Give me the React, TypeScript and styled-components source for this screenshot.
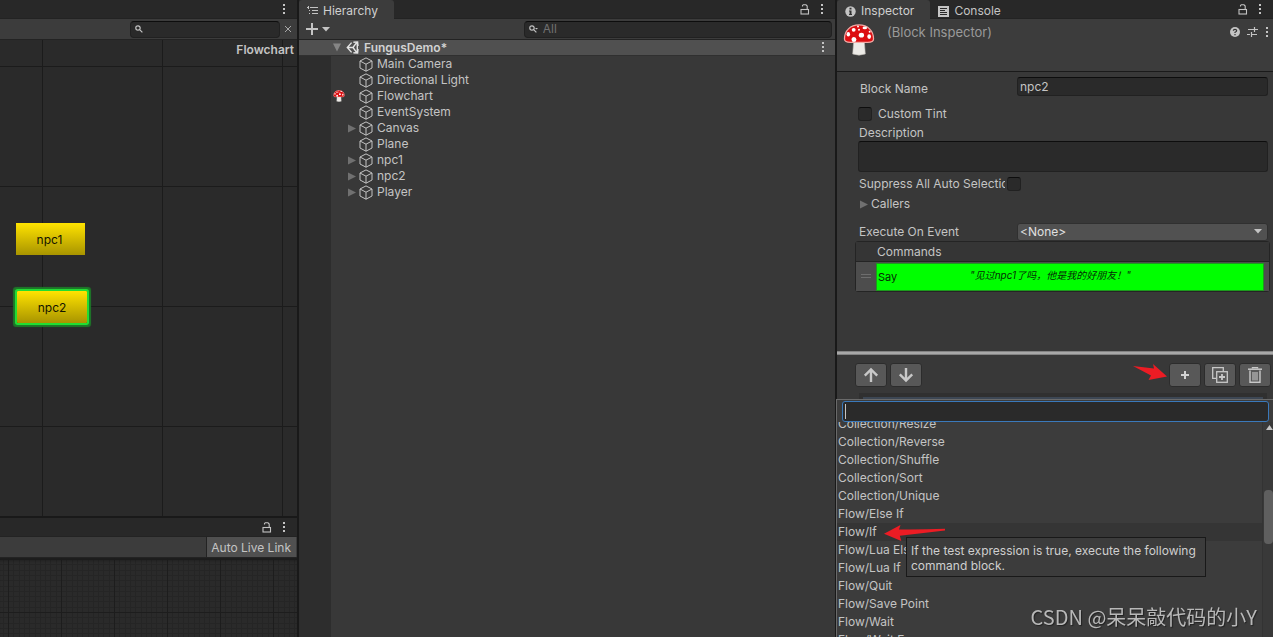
import React from 'react';
import styled, { createGlobalStyle, css } from 'styled-components';

const GlobalStyle = createGlobalStyle`
  *, *::before, *::after { box-sizing: border-box; }
  body {
    margin: 0;
    background: #191919;
    color: #c4c4c4;
    font: 12px/16px Inter, "Noto Sans CJK SC", sans-serif;
    overflow: hidden;
  }
  button, input, select, textarea { font: inherit; color: inherit; margin: 0; }
  button { padding: 0; border: 0; background: none; text-align: left; }
  ul { list-style: none; margin: 0; padding: 0; }
  svg { display: block; flex: none; }
`;

/* ---------- shared parts ---------- */

const Editor = styled.main`
  display: grid;
  grid-template-columns: minmax(0, 297fr) minmax(0, 536fr) minmax(0, 436fr);
  column-gap: 2px;
  height: 100vh;
`;

const Column = styled.section`
  display: flex;
  flex-direction: column;
  min-height: 0;
  min-width: 0;
  background: #383838;
`;

const TabBar = styled.header`
  display: flex;
  flex: none;
  height: 19px;
  background: #282828;
  box-shadow: inset 0 -1px #232323;
`;

const Tab = styled.button<{ $active?: boolean }>`
  display: flex;
  align-items: center;
  gap: 5px;
  height: 19px;
  padding: 3px 16px 0 8px;
  border-radius: 3px 3px 0 0;
  ${(p) => p.$active && css`background: #3c3c3c; color: #d0d0d0;`}
`;

const Spacer = styled.div`
  flex: 1;
`;

const TabTools = styled.div`
  display: flex;
  align-items: center;
  gap: 10px;
  padding-right: 11px;
`;

const IconButton = styled.button`
  display: flex;
  align-items: center;
  justify-content: center;
  flex: none;
`;

const Toolbar = styled.div`
  display: flex;
  align-items: center;
  flex: none;
  height: 21px;
  background: #3c3c3c;
  border-bottom: 1px solid #232323;
`;

const fieldLook = css`
  background: #2a2a2a;
  border: 1px solid #212121;
  border-top-color: #0d0d0d;
  border-radius: 3px;
  outline: 0;
`;

const SearchBox = styled.label<{ $width: string }>`
  ${fieldLook}
  display: flex;
  align-items: center;
  gap: 5px;
  width: ${(p) => p.$width};
  height: 17px;
  padding: 0 4px;
  border-radius: 4px;
  input {
    flex: 1;
    min-width: 0;
    height: 14px;
    padding: 0;
    border: 0;
    outline: 0;
    background: none;
  }
  input::placeholder { color: #717171; }
`;

/* ---------- icons ---------- */

const Kebab = () => (
  <svg width="4" height="11" viewBox="0 0 4 11" fill="#c4c4c4">
    <rect x="1" y="0" width="2" height="2" /><rect x="1" y="4" width="2" height="2" /><rect x="1" y="8" width="2" height="2" />
  </svg>
);

const Lock = () => (
  <svg width="10" height="11" viewBox="0 0 10 11" fill="none" stroke="#c4c4c4" strokeWidth="1.1">
    <rect x="1" y="5.5" width="7.5" height="4.5" /><path d="M2.5 2.6V1.4L3.3.8H6L7.2 2V5" />
  </svg>
);

const Magnifier = ({ caret }: { caret?: boolean }) => (
  <svg width="9" height="8" viewBox="0 0 9 8" fill="none" stroke="#c4c4c4" strokeWidth="1.2">
    <circle cx="3" cy="3" r="2.2" /><path d="M4.6 4.6 7.4 7.4" />
    {caret && <path d="M6 3h3L7.5 4.6z" fill="#c4c4c4" stroke="none" />}
  </svg>
);

const Triangle = ({ open }: { open?: boolean }) => (
  <svg width="8" height="9" viewBox="0 0 8 9" fill={open ? '#858585' : '#707070'}>
    <path d={open ? 'M0 .5h8L4 8.5z' : 'M0 .5v8l8-4z'} />
  </svg>
);

const Cube = () => (
  <svg width="14" height="15" viewBox="0 0 14 15" fill="none" stroke="#c4c4c4" strokeWidth="1">
    <path d="M7 .9 13 4v7L7 14.2 1 11V4zM1 4l6 3.2L13 4M7 7.2v7" />
  </svg>
);

const UnityLogo = () => (
  <svg width="13" height="13" viewBox="0 0 13 13" fill="none" stroke="#e4e4e4" strokeWidth="1.4">
    <path d="M5.6 1.6 1.3 6.5l4.3 4.9M7.4 1.2 11.6.9 12 5M7.4 11.8l4.2.3L12 8M1.6 6.5h5.6M7 6.5 10.6 1.6M7 6.5l3.6 4.9M11.3 2.4v8.2" />
  </svg>
);

const Mushroom = ({ size }: { size: number }) => (
  <svg width={size} height={size} viewBox="0 0 32 33">
    <path d="M10.500 18 9.500 31q6.500 2.200 13 0L21.500 18z" fill="#eceae6" stroke="#bdbab4" strokeWidth=".6" />
    <path d="M1 15.500C1 7 7 1 16 1s15 6 15 14.500Q31 19 25 19H7q-6 0-6-3.500z" fill="#dc0d10" stroke="#f2a9a5" strokeWidth="1.300" />
    <g fill="#fff">
      <ellipse cx="5" cy="10.500" rx="1.800" ry="2.300" /><ellipse cx="10.500" cy="6" rx="2" ry="1.900" />
      <ellipse cx="18.500" cy="11.500" rx="2.700" ry="2.500" /><ellipse cx="10.800" cy="16" rx="2.500" ry="2.600" />
      <ellipse cx="22" cy="4" rx="2.300" ry="1.400" /><ellipse cx="26.500" cy="13" rx="1.900" ry="2.500" />
      <circle cx="16" cy="6" r="1" /><circle cx="27" cy="8" r="1" /><circle cx="15" cy="2.500" r="1" />
    </g>
  </svg>
);

const DropArrow = () => (
  <svg width="8" height="5" viewBox="0 0 8 5" fill="#c4c4c4"><path d="M0 0h8L4 4.500z" /></svg>
);

/* ---------- flowchart window ---------- */

const Canvas = styled.div`
  position: relative;
  flex: 0 0 476px;
  background:
    linear-gradient(to right, #1b1b1b 1px, transparent 1px) 42px 26px / 120px 120px,
    linear-gradient(to bottom, #1b1b1b 1px, transparent 1px) 42px 26px / 120px 120px,
    #2a2a2a;
`;

const CanvasTitle = styled.h2`
  margin: 0;
  padding: 2px 3px 0 0;
  text-align: right;
  font-size: 12px;
  font-weight: 600;
  color: #c4c4c4;
`;

const Node = styled.button<{ $x: number; $y: number; $selected?: boolean }>`
  position: absolute;
  left: ${(p) => p.$x}px;
  top: ${(p) => p.$y}px;
  width: 69px;
  height: 32px;
  padding: 2px 2px 0 0;
  text-align: center;
  color: #141400;
  background: linear-gradient(#ffe300, #a89400);
  ${(p) => p.$selected && css`
    width: 70px;
    padding-right: 0;
    border-radius: 1px;
    box-shadow: 0 0 0 2px #22dd33, 0 0 1px 4px #1d7a28;
  `}
`;

const CloseButton = styled(IconButton)`
  width: 17px;
  padding-right: 1px;
`;

const LiveLink = styled.button`
  height: 20px;
  padding: 1px 5px 0 4px;
  margin-right: 1px;
  background: #505050;
  border-left: 1px solid #232323;
  white-space: nowrap;
`;

const AnimatorGrid = styled.div`
  flex: 1;
  box-shadow: inset 0 4px 3px -2px #1c1c1c;
  background:
    linear-gradient(to right, #1d1d1d 1px, transparent 1px) 8px 1px / 53px 53px,
    linear-gradient(to bottom, #1d1d1d 1px, transparent 1px) 8px 1px / 53px 53px,
    repeating-linear-gradient(to right, #252525 0 1px, transparent 1px 10%) 8px 1px / 53px 53px,
    repeating-linear-gradient(to bottom, #252525 0 1px, transparent 1px 10%) 8px 1px / 53px 53px,
    #2a2a2a;
`;

const LowerTabBar = styled(TabBar)`
  height: 21px;
  border-top: 2px solid #191919;
`;

function FlowchartWindow() {
  return (
    <Column>
      <TabBar>
        <Spacer />
        <TabTools><IconButton aria-label="Flowchart menu"><Kebab /></IconButton></TabTools>
      </TabBar>
      <Toolbar>
        <Spacer />
        <SearchBox $width="150px"><Magnifier /><input aria-label="Search blocks" /></SearchBox>
        <CloseButton aria-label="Clear search">
          <svg width="8" height="8" viewBox="0 0 8 8" stroke="#a8a8a8"><path d="M1 1l6 6M7 1 1 7" /></svg>
        </CloseButton>
      </Toolbar>
      <Canvas>
        <CanvasTitle>Flowchart</CanvasTitle>
        <Node $x={16} $y={183}>npc1</Node>
        <Node $x={17} $y={251} $selected>npc2</Node>
      </Canvas>
      <LowerTabBar>
        <Spacer />
        <TabTools>
          <IconButton aria-label="Lock"><Lock /></IconButton>
          <IconButton aria-label="Animator menu"><Kebab /></IconButton>
        </TabTools>
      </LowerTabBar>
      <Toolbar>
        <Spacer />
        <LiveLink>Auto Live Link</LiveLink>
      </Toolbar>
      <AnimatorGrid />
    </Column>
  );
}

/* ---------- hierarchy ---------- */

const AddButton = styled(IconButton)`
  gap: 4px;
  padding-left: 7px;
`;

const HierarchySearch = styled(SearchBox)`
  margin-right: 3px;
`;

const SceneRow = styled.div`
  display: flex;
  align-items: center;
  flex: none;
  height: 16px;
  padding: 0 10px 0 34px;
  gap: 5px;
  background: #505050;
  border-bottom: 1px solid #303030;
  font-weight: 600;
  color: #d2d2d2;
`;

const Tree = styled.ul`
  flex: 1;
  background: linear-gradient(to right, #2d2d2d 32px, #383838 32px);
`;

const TreeRow = styled.li`
  display: grid;
  grid-template-columns: 12px 14px 14px 1fr;
  align-items: center;
  height: 16px;
  padding-left: 34px;
  button { padding-left: 4px; }
`;

const TreeSlot = styled.span`
  display: flex;
  &:nth-child(2) { padding-left: 3px; }
`;

const objects: { name: string; children?: boolean; fungus?: boolean }[] = [
  { name: 'Main Camera' },
  { name: 'Directional Light' },
  { name: 'Flowchart', fungus: true },
  { name: 'EventSystem' },
  { name: 'Canvas', children: true },
  { name: 'Plane' },
  { name: 'npc1', children: true },
  { name: 'npc2', children: true },
  { name: 'Player', children: true },
];

function HierarchyWindow() {
  return (
    <Column>
      <TabBar>
        <Tab $active>
          <svg width="11" height="10" viewBox="0 0 11 10" fill="#c4c4c4">
            <path d="M0 1h2v1H0zM3 1h8v1H3zM2 4h1v1H2zM5 4h6v1H5zM2 7h1v1H2zM5 7h6v1H5zM1 0h1v3H1z" />
          </svg>
          Hierarchy
        </Tab>
        <Spacer />
        <TabTools>
          <IconButton aria-label="Lock"><Lock /></IconButton>
          <IconButton aria-label="Hierarchy menu"><Kebab /></IconButton>
        </TabTools>
      </TabBar>
      <Toolbar>
        <AddButton aria-label="Create">
          <svg width="12" height="12" viewBox="0 0 12 12" fill="#c4c4c4"><path d="M5 0h2v5h5v2H7v5H5V7H0V5h5z" /></svg>
          <DropArrow />
        </AddButton>
        <Spacer />
        <HierarchySearch $width="57.5%"><Magnifier caret /><input aria-label="Search hierarchy" placeholder="All" /></HierarchySearch>
      </Toolbar>
      <SceneRow>
        <Triangle open />
        <UnityLogo />
        FungusDemo*
        <Spacer />
        <IconButton aria-label="Scene menu"><Kebab /></IconButton>
      </SceneRow>
      <Tree>
        {objects.map((o) => (
          <TreeRow key={o.name}>
            <TreeSlot>{o.fungus && <Mushroom size={12} />}</TreeSlot>
            <TreeSlot>{o.children && <Triangle />}</TreeSlot>
            <Cube />
            <button>{o.name}</button>
          </TreeRow>
        ))}
      </Tree>
    </Column>
  );
}

/* ---------- inspector ---------- */

const InspectorHeader = styled.div`
  display: flex;
  align-items: flex-start;
  flex: none;
  height: 53px;
  padding: 5px 4px 0 6px;
  background: #3c3c3c;
  border-bottom: 1px solid #1a1a1a;
`;

const InspectorTitle = styled.h1`
  flex: 1;
  margin: 0;
  padding-left: 12px;
  font-size: 13px;
  font-weight: 400;
  color: #9a9a9a;
`;

const HeaderTools = styled.div`
  display: flex;
  align-items: center;
  gap: 7px;
  height: 16px;
`;

const Properties = styled.div`
  display: flex;
  flex-direction: column;
  flex: none;
  height: 279px;
  padding: 4px 3px 0 18px;
`;

const Field = styled.div<{ $height: number }>`
  display: grid;
  grid-template-columns: minmax(0, 149px) minmax(0, 1fr);
  align-items: center;
  gap: 0 9px;
  height: ${(p) => p.$height}px;
  padding: 0 2px 0 4px;
`;

const Label = styled.label`
  overflow: hidden;
  white-space: nowrap;
`;

const NameLabel = styled(Label)`
  padding: 6px 0 0 1px;
`;

const TextField = styled.input`
  ${fieldLook}
  width: 100%;
  height: 19px;
  padding: 0 2px;
`;

const Check = styled.input`
  ${fieldLook}
  appearance: none;
  flex: none;
  width: 14px;
  height: 14px;
`;

const CheckRow = styled.div`
  display: flex;
  align-items: center;
  gap: 6px;
  height: 28px;
  padding: 8px 0 0 3px;
`;

const SuppressRow = styled(CheckRow)`
  gap: 2px;
  height: 23px;
  padding: 0 0 0 4px;
  ${Label} { width: 146px; }
`;

const TextArea = styled.textarea`
  ${fieldLook}
  display: block;
  width: calc(100% - 5px);
  height: 31px;
  margin: 0 2px 0 3px;
  resize: none;
`;

const DescriptionLabel = styled(Label)`
  height: 17px;
  padding: 1px 0 0 4px;
`;

const Foldout = styled.button`
  display: flex;
  align-items: center;
  gap: 3px;
  height: 18px;
  padding-left: 5px;
  margin-bottom: 9px;
`;

const SelectWrap = styled.div`
  display: flex;
  align-items: center;
  position: relative;
  svg { position: absolute; right: 6px; pointer-events: none; }
`;

const Select = styled.select`
  appearance: none;
  width: 100%;
  height: 18px;
  padding: 0 2px;
  background: #515151;
  border: 1px solid #303030;
  border-radius: 3px;
  color: #e0e0e0;
`;

const CommandBox = styled.section`
  border: 1px solid #242424;
  border-radius: 3px;
  background: #414141;
`;

const CommandTitle = styled.h3`
  height: 20px;
  margin: 0;
  padding: 2px 0 0 21px;
  font-size: 12px;
  font-weight: 400;
  background: #353535;
  border-bottom: 1px solid #242424;
`;

const CommandRow = styled.div`
  display: grid;
  grid-template-columns: 20px minmax(0, 1fr);
  align-items: center;
  height: 29px;
  padding: 1px 5px 0 0;
  background: #4d4d4d;
`;

const CommandCard = styled.button`
  display: grid;
  grid-template-columns: 92px minmax(0, 1fr);
  height: 28px;
  padding-left: 1px;
  border: 1px solid #1d9a1d;
  background: #00ff00;
  color: #062a06;
  font-size: 11px;
  line-height: 27px;
  em { font-size: 10px; line-height: 22px; }
`;

const Divider = styled.hr`
  flex: none;
  width: 100%;
  height: 4px;
  margin: 0;
  border: solid #838383;
  border-width: 1px 0;
  background: #a8a8a8;
`;

const ButtonStrip = styled.div`
  position: relative;
  display: flex;
  flex: none;
  gap: 3px;
  height: 38px;
  padding: 8px 2px 0 18px;
`;

const ToolButton = styled.button`
  display: flex;
  align-items: center;
  justify-content: center;
  width: 32px;
  height: 24px;
  border: 1px solid #2c2c2c;
  border-radius: 3px;
  background: #585858;
`;

const PlusPointer = styled.svg`
  position: absolute;
  right: 106px;
  top: 8px;
`;

const HiddenBlock = styled.div`
  flex: none;
  height: 6px;
  margin: 0 6px 0 22px;
  padding: 4px 4px 0;
  background: #303030;
  &::before { content: ''; display: block; height: 2px; background: #3d4754; }
`;

function InspectorWindow() {
  return (
    <Column>
      <TabBar>
        <Tab $active>
          <svg width="11" height="11" viewBox="0 0 11 11"><circle cx="5.500" cy="5.500" r="5.200" fill="#c4c4c4" /><path d="M4.500 1.800h2v1.600h-2zM4 4.400h2.500V8H7v1H4V8h.6V5.400H4z" fill="#303030" /></svg>
          Inspector
        </Tab>
        <Tab>
          <svg width="11" height="11" viewBox="0 0 11 11"><path d="M0 0h11v11H0z" fill="#c4c4c4" /><path d="M2 2.500h7M2 4.500h5M2 6.500h7M2 8.500h7" stroke="#282828" /></svg>
          Console
        </Tab>
        <Spacer />
        <TabTools>
          <IconButton aria-label="Lock"><Lock /></IconButton>
          <IconButton aria-label="Inspector menu"><Kebab /></IconButton>
        </TabTools>
      </TabBar>
      <InspectorHeader>
        <Mushroom size={32} />
        <InspectorTitle>(Block Inspector)</InspectorTitle>
        <HeaderTools>
          <IconButton aria-label="Help">
            <svg width="10" height="10" viewBox="0 0 10 10"><circle cx="5" cy="5" r="5" fill="#c4c4c4" /><path d="M3.300 3.800Q3.400 2.300 5 2.300t1.700 1.500Q6.700 4.500 5 5.300V6M5 7v1.200" fill="none" stroke="#333" strokeWidth="1.200" /></svg>
          </IconButton>
          <IconButton aria-label="Presets">
            <svg width="11" height="10" viewBox="0 0 11 10" stroke="#c4c4c4" strokeWidth="1.200"><path d="M1 2.500h6M7.500 2.500H11M7.500 0v5M0 7.500h3M4.500 7.500H10M4.500 5v5" /></svg>
          </IconButton>
          <IconButton aria-label="Component menu"><Kebab /></IconButton>
        </HeaderTools>
      </InspectorHeader>
      <Properties>
        <Field $height={20}>
          <NameLabel htmlFor="block-name">Block Name</NameLabel>
          <TextField id="block-name" defaultValue="npc2" />
        </Field>
        <CheckRow>
          <Check type="checkbox" id="tint" /><Label htmlFor="tint">Custom Tint</Label>
        </CheckRow>
        <DescriptionLabel htmlFor="description">Description</DescriptionLabel>
        <TextArea id="description" />
        <SuppressRow>
          <Label htmlFor="suppress">Suppress All Auto Selections</Label>
          <Check type="checkbox" id="suppress" />
        </SuppressRow>
        <Foldout><Triangle />Callers</Foldout>
        <Field $height={19}>
          <Label htmlFor="event">Execute On Event</Label>
          <SelectWrap>
            <Select id="event"><option>&lt;None&gt;</option></Select>
            <DropArrow />
          </SelectWrap>
        </Field>
        <CommandBox>
          <CommandTitle>Commands</CommandTitle>
          <CommandRow>
            <svg width="20" height="10" viewBox="0 0 20 10" stroke="#6e6e6e"><path d="M5 2.500h10M5 5.500h10" /></svg>
            <CommandCard><span>Say</span><em>"见过npc1了吗，他是我的好朋友！"</em></CommandCard>
          </CommandRow>
        </CommandBox>
      </Properties>
      <Divider />
      <ButtonStrip>
        <ToolButton aria-label="Move up">
          <svg width="16" height="16" viewBox="0 0 16 16" fill="none" stroke="#c8c8c8" strokeWidth="2.400"><path d="M8 15V2.500M1.800 8.600 8 2.400l6.200 6.200" /></svg>
        </ToolButton>
        <ToolButton aria-label="Move down">
          <svg width="16" height="16" viewBox="0 0 16 16" fill="none" stroke="#c8c8c8" strokeWidth="2.400"><path d="M8 1v12.500M1.800 7.400 8 13.600l6.200-6.200" /></svg>
        </ToolButton>
        <Spacer />
        <ToolButton aria-label="Add command">
          <svg width="8" height="8" viewBox="0 0 8 8" fill="#d2d2d2"><path d="M3 0h2v3h3v2H5v3H3V5H0V3h3z" /></svg>
        </ToolButton>
        <ToolButton aria-label="Duplicate command">
          <svg width="16" height="16" viewBox="0 0 16 16" fill="none" stroke="#c8c8c8" strokeWidth="1.300"><path d="M4 11.300H.7V.7h10.600V4" /><rect x="4.700" y="4.700" width="10.600" height="10.600" /><path d="M10 7v6M7 10h6" strokeWidth="1.800" /></svg>
        </ToolButton>
        <ToolButton aria-label="Delete command">
          <svg width="14" height="16" viewBox="0 0 14 16" fill="none" stroke="#c8c8c8"><path d="M0 2.200h14" strokeWidth="1.500" /><path d="M4.500 1.500V.5h5v1M2 3.500v11.800h10V3.500" strokeWidth="1.400" /><path d="M5 5v8.500M7 5v8.500M9 5v8.500" strokeWidth="1.100" /></svg>
        </ToolButton>
        <PlusPointer width="34" height="18" viewBox="0 0 34 18" fill="#ed1c24"><path d="M0 3 21 5.500 20 1 34 13.500 15.500 17 18 12.500z" /></PlusPointer>
      </ButtonStrip>
      <HiddenBlock />
      <CommandPopup />
    </Column>
  );
}

/* ---------- add-command popup ---------- */

const Popup = styled.div`
  display: flex;
  flex: 1;
  flex-direction: column;
  min-height: 0;
  margin-left: -1px;
  background: #3c3c3c;
  border: solid #6a6a6a;
  border-width: 1px 0 0 1px;
`;

const PopupSearch = styled.div`
  position: relative;
  z-index: 1;
  padding: 1px 4px 0 5px;
`;

const PopupInput = styled.input`
  display: block;
  width: 100%;
  height: 21px;
  padding: 0 4px;
  border: 1px solid #3a79bb;
  border-radius: 3px;
  background: #2a2a2a;
  outline: 0;
`;

const TextCaret = styled.span`
  position: absolute;
  left: 8px;
  top: 4px;
  width: 1px;
  height: 15px;
  background: #c4c4c4;
`;

const PopupBody = styled.div`
  display: flex;
  flex: 1;
  min-height: 0;
  overflow: hidden;
`;

const CommandList = styled.ul`
  flex: 1;
  margin-top: -7px;
`;

const CommandItem = styled.li<{ $hover?: boolean }>`
  position: relative;
  height: 18px;
  padding-left: 1px;
  background: ${(p) => (p.$hover ? '#353535' : 'transparent')};
  z-index: ${(p) => (p.$hover ? 1 : 'auto')};
  > button { display: block; width: 100%; height: 18px; line-height: 18px; }
`;

const RowPointer = styled.svg`
  position: absolute;
  left: 47px;
  top: 2px;
`;

const Tooltip = styled.div`
  position: absolute;
  left: 69px;
  top: 14px;
  width: 300px;
  height: 40px;
  padding: 5px 4px;
  line-height: 15px;
  background: #3c3c3c;
  border: 1px solid #191919;
  color: #cfcfcf;
`;

const ScrollTrack = styled.div`
  flex: none;
  width: 11px;
  padding: 3px 0 0 1px;
  background: #393939;
  border-left: 1px solid #333;
  svg { margin-left: 2px; }
`;

const ScrollThumb = styled.div`
  width: 9px;
  height: 54px;
  margin-top: 60px;
  border-radius: 4px;
  background: #5f5f5f;
`;

const commands = [
  'Collection/Resize', 'Collection/Reverse', 'Collection/Shuffle', 'Collection/Sort', 'Collection/Unique',
  'Flow/Else If', 'Flow/If', 'Flow/Lua Else If', 'Flow/Lua If', 'Flow/Quit', 'Flow/Save Point', 'Flow/Wait',
  'Flow/Wait Frames',
];

function CommandPopup() {
  return (
    <Popup>
      <PopupSearch>
        <PopupInput aria-label="Search commands" />
        <TextCaret />
      </PopupSearch>
      <PopupBody>
        <CommandList>
          {commands.map((c) => (
            <CommandItem key={c} $hover={c === 'Flow/If'}>
              <button>{c}</button>
              {c === 'Flow/If' && (
                <>
                  <Tooltip role="tooltip">If the test expression is true, execute the following command block.</Tooltip>
                  <RowPointer width="62" height="16" viewBox="0 0 62 16" fill="#ed1c24">
                    <path d="M0 8.700 16.500 0 15 4.500Q38 4.800 61 3.800V5.500L15.800 10.800 17.300 16z" />
                  </RowPointer>
                </>
              )}
            </CommandItem>
          ))}
        </CommandList>
        <ScrollTrack>
          <svg width="7" height="5" viewBox="0 0 7 5" fill="#c4c4c4"><path d="M3.500 0 7 5H0z" /></svg>
          <ScrollThumb />
        </ScrollTrack>
      </PopupBody>
    </Popup>
  );
}

const Watermark = styled.p`
  position: fixed;
  right: 16px;
  bottom: 6px;
  z-index: 2;
  margin: 0;
  font: 20px/28px "Noto Sans CJK SC", sans-serif;
  font-weight: 400;
  color: #b8b8b8;
  text-shadow: 1px 1px 1px #222;
  pointer-events: none;
`;

export default function App() {
  return (
    <>
      <GlobalStyle />
      <Editor>
        <FlowchartWindow />
        <HierarchyWindow />
        <InspectorWindow />
      </Editor>
      <Watermark>CSDN @呆呆敲代码的小Y</Watermark>
    </>
  );
}
